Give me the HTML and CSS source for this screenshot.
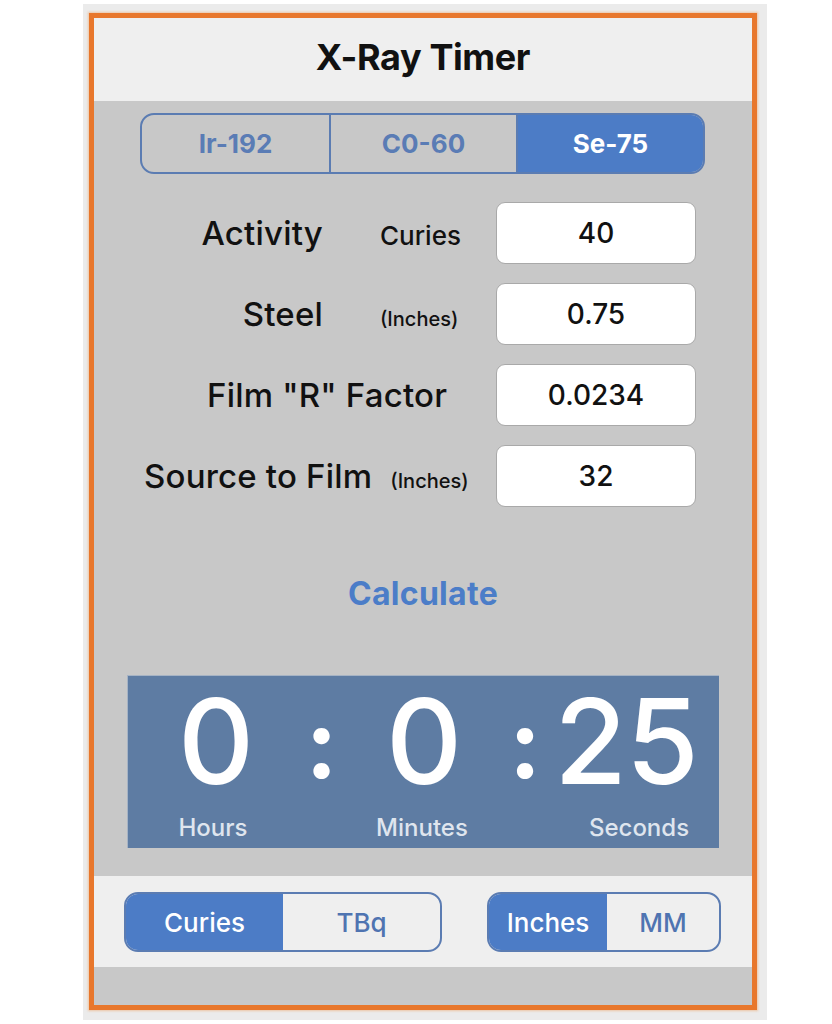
FILE: index.html
```html
<!DOCTYPE html>
<html lang="en">
<head>
<meta charset="utf-8">
<title>X-Ray Timer</title>
<link rel="stylesheet" href="styles.css">
</head>
<body>
<div class="frame">
  <div class="app">
    <header class="header"><h1 class="title">X-Ray Timer</h1></header>
    <main class="content">
      <div class="isotope">
        <div class="isotope__item">Ir-192</div>
        <div class="isotope__item">C0-60</div>
        <div class="isotope__item isotope__item--on">Se-75</div>
      </div>
      <div class="form">
        <div class="row">
          <div class="fieldlabel fieldlabel--a"><span class="label">Activity</span><span class="unit">Curies</span></div>
          <div class="input">40</div>
        </div>
        <div class="row">
          <div class="fieldlabel fieldlabel--a"><span class="label">Steel</span><span class="unit unit--small">(Inches)</span></div>
          <div class="input">0.75</div>
        </div>
        <div class="row">
          <div class="fieldlabel fieldlabel--b"><span class="label">Film "R" Factor</span></div>
          <div class="input">0.0234</div>
        </div>
        <div class="row">
          <div class="fieldlabel fieldlabel--c"><span class="label">Source to Film</span><span class="unit unit--small">(Inches)</span></div>
          <div class="input">32</div>
        </div>
      </div>
      <div class="calc">Calculate</div>
      <div class="timer">
        <div class="timer__num">0</div>
        <div class="timer__colon">:</div>
        <div class="timer__num">0</div>
        <div class="timer__colon">:</div>
        <div class="timer__num timer__num--sec">25</div>
        <div class="timer__lbl">Hours</div>
        <div class="timer__lbl timer__lbl--min">Minutes</div>
        <div class="timer__lbl timer__lbl--sec">Seconds</div>
      </div>
    </main>
    <footer class="footer">
      <div class="seg seg--units">
        <div class="seg__item seg__item--on">Curies</div>
        <div class="seg__item">TBq</div>
      </div>
      <div class="seg seg--len">
        <div class="seg__item seg__item--on">Inches</div>
        <div class="seg__item">MM</div>
      </div>
    </footer>
    <div class="bottom"></div>
  </div>
</div>
</body>
</html>
```
FILE: styles.css
```css
* { box-sizing: border-box; }
html, body { margin: 0; padding: 0; background: #ffffff; }
body { font-family: Inter, "Noto Sans", "Liberation Sans", sans-serif; color: #111; }

.frame {
  margin: 4px 0 0 83px;
  width: 684px;
  height: 1016px;
  background: #ebebeb;
  padding: 9px 10px 10px 6px;
}
.app {
  height: 997px;
  border: 5px solid #e8772c;
  box-shadow: 0 0 2px 1px rgba(240, 150, 80, 0.45);
  background: #c8c8c8;
  display: flex;
  flex-direction: column;
}
.header {
  height: 83px;
  flex: none;
  background: #efefef;
  display: flex;
  align-items: center;
  justify-content: center;
}
.title {
  margin: 0;
  font-size: 36px;
  font-weight: 700;
  letter-spacing: -0.4px;
  color: #111;
  padding-bottom: 6px;
}
.content {
  height: 775px;
  flex: none;
  padding-top: 12px;
}
.isotope {
  margin-left: 46px;
  width: 565px;
  height: 61px;
  border: 2px solid #5b7cb2;
  border-radius: 14px;
  overflow: hidden;
  display: grid;
  grid-template-columns: 1fr 1fr 1fr;
}
.isotope__item {
  display: flex;
  align-items: center;
  justify-content: center;
  font-size: 26px;
  font-weight: 700;
  color: #5a7cb5;
}
.isotope__item + .isotope__item { border-left: 2px solid #5b7cb2; }
.isotope__item--on { background: #4c7cc6; color: #fff; }

.form {
  margin-top: 28px;
  display: flex;
  flex-direction: column;
  gap: 19px;
}
.row { display: flex; align-items: center; height: 62px; }
.fieldlabel {
  width: 402px;
  display: flex;
  align-items: baseline;
}
.label { font-size: 33px; font-weight: 500; letter-spacing: 0.2px; white-space: nowrap; color: #111; }
.unit { font-size: 26px; font-weight: 500; white-space: nowrap; color: #111; }
.unit--small { font-size: 20px; }
.fieldlabel--a .label { width: 229px; text-align: right; }
.fieldlabel--a .unit { margin-left: 57px; }
.fieldlabel--b { padding-left: 113px; }
.fieldlabel--c { padding-left: 50px; }
.fieldlabel--c .unit { margin-left: 18px; }
.input {
  width: 200px;
  height: 62px;
  background: #fff;
  border: 1px solid #a9a9a9;
  border-radius: 9px;
  display: flex;
  align-items: center;
  justify-content: center;
  font-size: 28px;
  font-weight: 500;
  color: #111;
}

.calc {
  margin-top: 67px;
  height: 40px;
  line-height: 40px;
  text-align: center;
  font-size: 32px;
  font-weight: 700;
  letter-spacing: 0.3px;
  color: #4b7dc8;
}

.timer {
  margin: 61px 0 0 33px;
  width: 592px;
  height: 173px;
  background: #5e7ca3;
  border-top: 1px solid #a6b3c4;
  border-left: 1px solid #a6b3c4;
  padding: 7px 0 6px;
  display: grid;
  grid-template-columns: 176px 35px 170px 24px 186px;
  grid-template-rows: 117px 28px;
  row-gap: 14px;
  color: #fff;
}
.timer__num {
  font-size: 118px;
  line-height: 117px;
  font-weight: 500;
  text-align: center;
}
.timer__num--sec { padding-left: 0; letter-spacing: -1px; }
.timer__colon {
  font-size: 96px;
  line-height: 120px;
  font-weight: 700;
  text-align: center;
}
.timer__lbl {
  font-size: 24px;
  font-weight: 500;
  line-height: 28px;
  color: #dfe5ee;
  text-align: center;
  grid-column: 1;
  padding-right: 6px;
}
.timer__lbl--min { grid-column: 3; padding-right: 4px; }
.timer__lbl--sec { grid-column: 5; padding-left: 26px; padding-right: 0; }

.footer {
  height: 91px;
  flex: none;
  background: #efefef;
  padding-top: 16px;
  display: flex;
  align-items: flex-start;
}
.seg {
  height: 60px;
  border: 2px solid #5b7cb2;
  border-radius: 14px;
  overflow: hidden;
  display: grid;
}
.seg--units { margin-left: 30px; width: 318px; grid-template-columns: 1fr 1fr; }
.seg--len { margin-left: 45px; width: 234px; grid-template-columns: 118px 1fr; }
.seg__item {
  display: flex;
  align-items: center;
  justify-content: center;
  font-size: 26px;
  font-weight: 500;
  color: #4f74b1;
}
.seg__item--on { background: #4c7cc6; color: #fff; }
.bottom { flex: 1; background: #c8c8c8; }
```
